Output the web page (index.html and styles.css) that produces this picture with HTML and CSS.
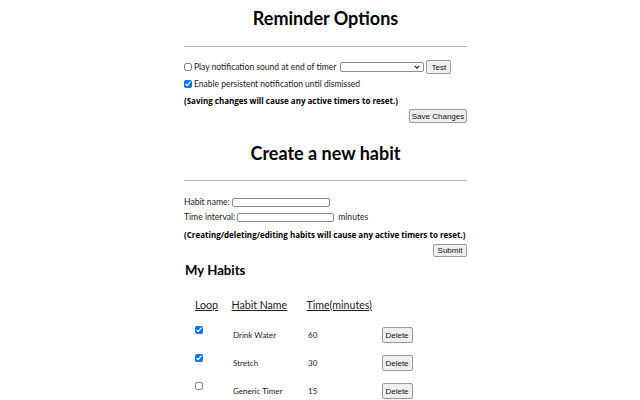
FILE: index.html
```html
<!DOCTYPE html>
<html lang="en">
<head>
<meta charset="utf-8">
<title>Habit Reminder Options</title>
<link rel="stylesheet" href="styles.css">
</head>
<body>
<div class="page">
  <h1 class="title first">Reminder Options</h1>
  <hr class="rule">
  <div class="row r1">
    <label class="check"><input type="checkbox" class="cb"><span>Play notification sound at end of timer</span></label>
    <select class="sound"></select>
    <button class="btn test">Test</button>
  </div>
  <div class="row r2">
    <label class="check"><input type="checkbox" class="cb" checked><span>Enable persistent notification until dismissed</span></label>
  </div>
  <p class="note n1">(Saving changes will cause any active timers to reset.)</p>
  <div class="actions a1"><button class="btn save">Save Changes</button></div>

  <h1 class="title second">Create a new habit</h1>
  <hr class="rule">
  <div class="row f1"><span class="lbl">Habit name:</span><input type="text" class="txt name"></div>
  <div class="row f2"><span class="lbl">Time interval:</span><input type="text" class="txt interval"><span class="lbl unit">minutes</span></div>
  <p class="note n2">(Creating/deleting/editing habits will cause any active timers to reset.)</p>
  <div class="actions a2"><button class="btn submit">Submit</button></div>

  <h2 class="sub">My Habits</h2>
  <table class="habits">
    <thead>
      <tr><th class="c1">Loop</th><th class="c2">Habit Name</th><th class="c3">Time(minutes)</th><th class="c4"></th></tr>
    </thead>
    <tbody>
      <tr><td class="c1 cbcell"><input type="checkbox" class="cb" checked></td><td class="c2">Drink Water</td><td class="c3">60</td><td class="c4"><button class="btn del">Delete</button></td></tr>
      <tr><td class="c1 cbcell"><input type="checkbox" class="cb" checked></td><td class="c2">Stretch</td><td class="c3">30</td><td class="c4"><button class="btn del">Delete</button></td></tr>
      <tr><td class="c1 cbcell"><input type="checkbox" class="cb"></td><td class="c2">Generic Timer</td><td class="c3">15</td><td class="c4"><button class="btn del">Delete</button></td></tr>
    </tbody>
  </table>
</div>
</body>
</html>
```

FILE: styles.css
```css
html, body {
  margin: 0;
  padding: 0;
  background: #ffffff;
}
body {
  font-family: Lato, "Open Sans", sans-serif;
  font-size: 8.5px;
  color: #1a1a1a;
}
.page {
  width: 283px;
  margin-left: 184px;
}
.title {
  margin: 0;
  font-family: Lato, "Liberation Sans", sans-serif;
  font-weight: 700;
  font-size: 18px;
  line-height: 22px;
  text-align: center;
  color: #000;
}
.title.first { padding-top: 7px; }
.title.second { margin-top: 19px; }
.rule {
  border: 0;
  border-top: 1px solid #b4b4b4;
  height: 0;
  margin: 17px 0 0 0;
}
.title.second + .rule { margin-top: 16px; }

.row {
  display: flex;
  align-items: center;
  height: 14px;
}
.r1 { margin-top: 13px; }
.r2 { margin-top: 3px; }
.check {
  display: flex;
  align-items: center;
  gap: 2px;
  color: #222;
}
.cb {
  width: 8px;
  height: 8px;
  margin: 0;
  accent-color: #0075ff;
}
.sound {
  width: 84px;
  height: 10px;
  margin-left: 4px;
  padding: 0;
  border: 1px solid #8a8a8a;
  border-radius: 2px;
  background: #fff url("data:image/svg+xml,%3Csvg xmlns='http://www.w3.org/2000/svg' width='6' height='4' viewBox='0 0 6 4'%3E%3Cpath d='M0.7 0.8 L3 3.1 L5.3 0.8' fill='none' stroke='%23222' stroke-width='1.2'/%3E%3C/svg%3E") no-repeat right 3px center;
  -webkit-appearance: none;
  appearance: none;
}
.btn {
  font-family: "Liberation Sans", Arial, sans-serif;
  font-size: 8px;
  color: #111;
  background: #efefef;
  border: 1px solid #9a9a9a;
  border-radius: 2px;
  padding: 0;
  margin: 0;
}
.test {
  width: 25px;
  height: 14px;
  margin-left: 2px;
}
.note {
  margin: 4px 0 0 0;
  height: 12px;
  line-height: 12px;
  font-family: "Open Sans", Lato, sans-serif;
  font-size: 8px;
  font-weight: 700;
  color: #000;
  white-space: nowrap;
}
.actions {
  display: flex;
  justify-content: flex-end;
}
.a1 { margin-top: 2px; }
.save { width: 58px; height: 14px; }

.f1 { margin-top: 15px; height: 12px; }
.f2 { margin-top: 3px; height: 12px; }
.lbl {
  font-family: Lato, "Open Sans", sans-serif;
  font-size: 8.6px;
  color: #222;
}
.txt {
  height: 9px;
  padding: 0;
  margin: 0 0 0 2px;
  border: 1px solid #8a8a8a;
  border-radius: 2px;
  box-sizing: border-box;
  background: #fff;
}
.name { width: 98px; }
.interval { width: 97px; }
.unit { margin-left: 4px; }
.n2 { margin-top: 6px; }
.a2 { margin-top: 3px; }
.submit { width: 34px; height: 13px; }

.sub {
  margin: 5px 0 0 1px;
  font-family: Lato, "Liberation Sans", sans-serif;
  font-weight: 700;
  font-size: 13.2px;
  line-height: 16px;
  color: #000;
}
.habits {
  margin-top: 17px;
  border-collapse: collapse;
  border-spacing: 0;
}
.habits th, .habits td {
  padding: 0;
  text-align: left;
}
.habits th {
  height: 26px;
  vertical-align: top;
  line-height: 20px;
  font-family: Lato, "Open Sans", sans-serif;
  font-weight: 400;
  font-size: 10.6px;
  text-decoration: underline;
  color: #222;
}
.habits td {
  height: 28px;
  vertical-align: middle;
  font-family: Lato, "Open Sans", sans-serif;
  font-size: 8px;
  color: #222;
}
.habits .c1 { width: 36.5px; padding-left: 11px; }
.habits .c2 { width: 75px; }
.habits .c3 { width: 75px; }
.habits td.c2, .habits td.c3 { padding-left: 1.5px; width: 73.5px; }
.habits td.cbcell { vertical-align: top; padding-top: 5px; height: 23px; }
.del { width: 31px; height: 16px; display: block; }
```
